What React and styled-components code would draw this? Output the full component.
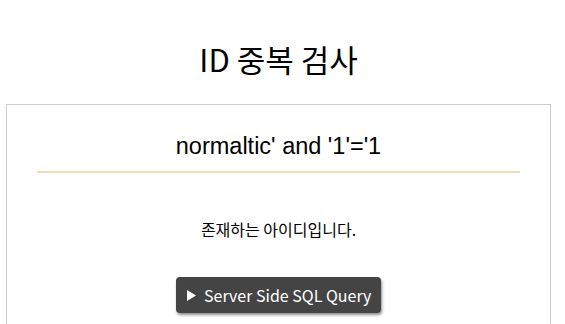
import React from "react";
import styled, { createGlobalStyle } from "styled-components";

const GlobalStyle = createGlobalStyle`
  body {
    margin: 0;
    background: #fff;
    font-family: "Noto Sans CJK KR", "Noto Sans", sans-serif;
    color: #000;
    overflow: hidden;
  }
`;

const App = () => {
  return (
    <>
      <GlobalStyle />
      <Page>
        <Title>ID 중복 검사</Title>
        <Card>
          <Query>normaltic' and '1'='1</Query>
          <Message>존재하는 아이디입니다.</Message>
          <ButtonRow>
            <QueryButton>
              <svg width="9" height="11" viewBox="0 0 9 11">
                <polygon points="0,0 9,5.5 0,11" fill="#fff" />
              </svg>
              <span>Server Side SQL Query</span>
            </QueryButton>
          </ButtonRow>
        </Card>
      </Page>
    </>
  );
};

export default App;

const Page = styled.div`
  width: 545px;
  margin-left: 6px;
`;

const Title = styled.h1`
  margin: 40px 0 26px;
  font-family: "Noto Sans CJK KR", sans-serif;
  font-size: 31px;
  font-weight: 400;
  line-height: 38px;
  text-align: center;
`;

const Card = styled.div`
  border: 1px solid #ccc;
  min-height: 230px;
`;

const Query = styled.div`
  margin: 0 30px;
  padding: 27px 0 11px;
  border-bottom: 2px solid #f5deb3;
  font-family: "Liberation Sans", Arial, sans-serif;
  font-size: 23.5px;
  line-height: 28px;
  text-align: center;
`;

const Message = styled.p`
  margin: 45px 0 0;
  font-size: 16px;
  line-height: 22px;
  text-align: center;
`;

const ButtonRow = styled.div`
  display: flex;
  justify-content: center;
  margin-top: 37px;
`;

const QueryButton = styled.button`
  display: flex;
  align-items: center;
  justify-content: flex-start;
  gap: 8px;
  height: 36px;
  width: 205px;
  padding: 0 0 0 11px;
  border: none;
  border-radius: 4px;
  background: #444;
  color: #fff;
  font-family: "Noto Sans CJK KR", sans-serif;
  font-size: 16px;
  white-space: nowrap;
  box-shadow: 1px 2px 3px rgba(0, 0, 0, 0.45);
`;
